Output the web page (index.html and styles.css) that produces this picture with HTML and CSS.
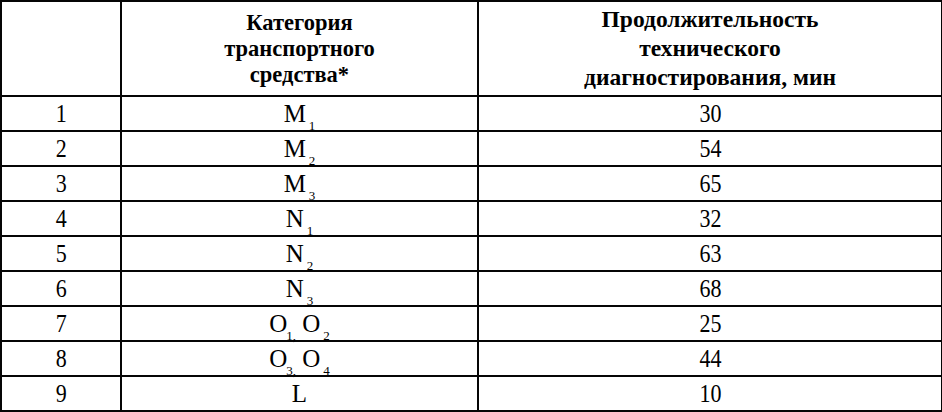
FILE: index.html
```html
<!DOCTYPE html>
<html lang="ru">
<head>
<meta charset="utf-8">
<link rel="stylesheet" href="styles.css">
<title>Продолжительность технического диагностирования</title>
</head>
<body>
<table class="diag">
  <colgroup>
    <col class="c-num">
    <col class="c-cat">
    <col class="c-dur">
  </colgroup>
  <thead>
    <tr>
      <th></th>
      <th class="h-cat">Категория<br>транспортного<br>средства*</th>
      <th class="h-dur">Продолжительность<br>технического<br>диагностирования, мин</th>
    </tr>
  </thead>
  <tbody>
    <tr><td><span class="n">1</span></td><td>M<sub>1</sub></td><td><span class="n">30</span></td></tr>
    <tr><td><span class="n">2</span></td><td>M<sub>2</sub></td><td><span class="n">54</span></td></tr>
    <tr><td><span class="n">3</span></td><td>M<sub>3</sub></td><td><span class="n">65</span></td></tr>
    <tr><td><span class="n">4</span></td><td>N<sub>1</sub></td><td><span class="n">32</span></td></tr>
    <tr><td><span class="n">5</span></td><td>N<sub>2</sub></td><td><span class="n">63</span></td></tr>
    <tr><td><span class="n">6</span></td><td>N<sub>3</sub></td><td><span class="n">68</span></td></tr>
    <tr><td><span class="n">7</span></td><td>O<sub class="tight">1,</sub> O<sub>2</sub></td><td><span class="n">25</span></td></tr>
    <tr><td><span class="n">8</span></td><td>O<sub class="tight">3,</sub> O<sub>4</sub></td><td><span class="n">44</span></td></tr>
    <tr><td><span class="n">9</span></td><td>L</td><td><span class="n">10</span></td></tr>
  </tbody>
</table>
</body>
</html>
```

FILE: styles.css
```css
html, body {
  margin: 0;
  padding: 0;
  background: #ffffff;
}

body {
  font-family: "Liberation Serif", "Times New Roman", serif;
  color: #000000;
}

.diag {
  border-collapse: collapse;
  table-layout: fixed;
  width: 941px;
}

.c-num { width: 120px; }
.c-cat { width: 357px; }
.c-dur { width: 464px; }

.diag th,
.diag td {
  border: 2px solid #050505;
  text-align: center;
  vertical-align: middle;
  padding: 0;
}

.diag th {
  height: 93px;
  font-weight: bold;
}

.h-cat {
  font-size: 22.5px;
  line-height: 26px;
  padding-top: 2px;
}

.h-dur {
  font-size: 23.5px;
  line-height: 29px;
  padding-bottom: 3px;
}

.diag td {
  height: 33px;
  font-size: 25px;
  line-height: 26px;
}

.n {
  display: inline-block;
  transform: scaleX(0.88);
}

.diag sub {
  font-size: 13px;
  vertical-align: -8px;
  line-height: 0;
  margin-left: 3px;
}

.diag sub.tight {
  margin-left: -1px;
}
```
